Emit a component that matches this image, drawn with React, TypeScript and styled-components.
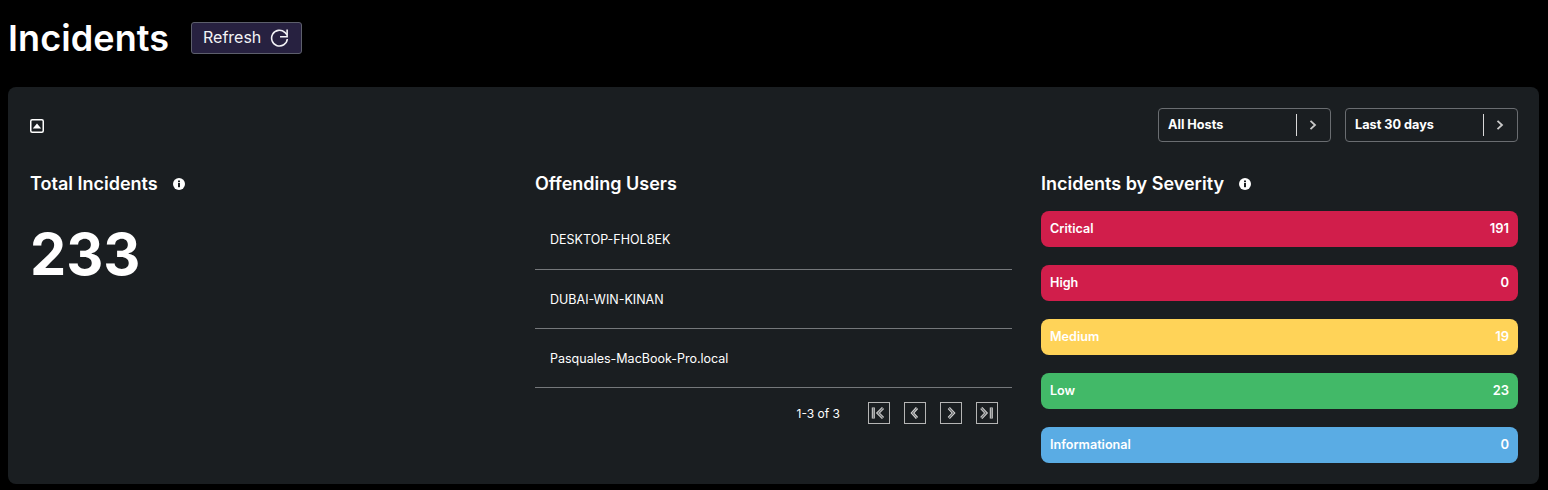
import React, {FC} from 'react'
import styled, {createGlobalStyle} from 'styled-components'

const GlobalStyle = createGlobalStyle`
  html, body {
    margin: 0;
    padding: 0;
    background: #000;
    color: #fff;
    font-family: Inter, "Liberation Sans", sans-serif;
  }
  * { box-sizing: border-box; }
`

const Root = styled.div`
  width: 1548px;
  height: 490px;
  padding: 0 9px 6px 8px;
  display: flex;
  flex-direction: column;
  overflow: hidden;
`

const Header = styled.header`
  display: flex;
  align-items: center;
  gap: 22px;
  height: 87px;
  padding-bottom: 11px;
`

const Title = styled.h1`
  margin: 0;
  width: 161px;
  font-size: 36px;
  line-height: 44px;
  font-weight: 600;
  letter-spacing: 0.1px;
`

const RefreshButton = styled.button`
  display: flex;
  align-items: center;
  gap: 9px;
  width: 111px;
  height: 32px;
  padding: 0 11px 2px;
  background: #272140;
  border: 1px solid #5d5f6c;
  border-radius: 3px;
  color: #f3f3f6;
  font: 400 16px Inter, "Liberation Sans", sans-serif;
`

const RefreshGlyph = styled.svg`
  margin-top: 2px;
`

const Panel = styled.section`
  flex: 1;
  background: #1a1e21;
  border-radius: 8px;
  padding: 21px 21px 21px 22px;
  display: flex;
  flex-direction: column;
`

const TopBar = styled.div`
  display: flex;
  align-items: center;
  justify-content: space-between;
  height: 34px;
`

const CollapseWrap = styled.span`
  display: flex;
  padding-top: 2px;
`

const Filters = styled.div`
  display: flex;
  gap: 14px;
`

const Filter = styled.div`
  display: flex;
  align-items: center;
  width: 173px;
  height: 34px;
  padding: 0 13px 0 9px;
  border: 1px solid #6a6d71;
  border-radius: 4px;
  font-size: 12.7px;
  font-weight: 700;
`

const FilterLabel = styled.span`
  flex: 1;
  padding-bottom: 2px;
`

const FilterDivider = styled.span`
  width: 1px;
  height: 22px;
  background: #d8d8d8;
  margin-right: 12px;
`

const Columns = styled.div`
  display: grid;
  grid-template-columns: 477px 478px 477px;
  column-gap: 28px;
  margin-top: 30px;
`

const Column = styled.div`
  display: flex;
  flex-direction: column;
`

const ColumnHeading = styled.div`
  display: flex;
  align-items: center;
  gap: 15px;
  height: 24px;
  padding-bottom: 2px;
  font-size: 18px;
  font-weight: 600;
`

const InfoGlyph = styled.svg`
  margin-top: 2px;
`

const BigNumber = styled.div`
  margin-top: 23px;
  font-size: 57.5px;
  line-height: 70px;
  font-weight: 700;
`

const UserList = styled.ul`
  list-style: none;
  margin: 15px 1px 0 0;
  padding: 0;
`

const UserRow = styled.li`
  height: 59px;
  padding: 0 15px;
  display: flex;
  align-items: center;
  border-bottom: 1px solid #75787b;
  font-size: 12.5px;
  font-weight: 400;
  &:first-child { padding-bottom: 1px; }
`

const Pager = styled.div`
  display: flex;
  align-items: center;
  justify-content: flex-end;
  margin-top: 14px;
  padding-right: 15px;
  height: 22px;
`

const PagerText = styled.span`
  font-size: 12px;
  margin-right: 28px;
`

const PagerButtons = styled.div`
  display: flex;
  gap: 14px;
`

const PagerButton = styled.button`
  width: 22px;
  height: 22px;
  padding: 0;
  display: flex;
  align-items: center;
  justify-content: center;
  background: none;
  border: 1px solid #b5b5b5;
`

const Bars = styled.div`
  display: flex;
  flex-direction: column;
  gap: 18px;
  margin-top: 15px;
`

const Bar = styled.div<{$color: string}>`
  height: 36px;
  padding: 0 9px 2px;
  display: flex;
  align-items: center;
  justify-content: space-between;
  border-radius: 8px;
  background: ${({$color}) => $color};
  font-size: 12.6px;
  font-weight: 600;
`

const BarCount = styled.span`
  font-size: 13px;
`

const InfoIcon: FC = () => (
    <InfoGlyph width="12" height="12" viewBox="0 0 12 12">
        <circle cx="6" cy="6" r="6" fill="#fff"/>
        <rect x="5" y="5" width="2" height="4.2" fill="#1a1e21"/>
        <rect x="5" y="2.5" width="2" height="1.7" fill="#1a1e21"/>
    </InfoGlyph>
)

const CollapseIcon: FC = () => (
    <svg width="14" height="14" viewBox="0 0 14 14">
        <rect x="0.75" y="0.75" width="12.5" height="12.5" rx="1.5" fill="none" stroke="#fff" strokeWidth="1.5"/>
        <path d="M2.8 9.5 L7 4.5 L11.2 9.5 Z" fill="#fff"/>
    </svg>
)

const RefreshIcon: FC = () => (
    <RefreshGlyph width="20" height="20" viewBox="0 0 20 20" fill="none" stroke="#f3f3f6" strokeWidth="1.6">
        <path d="M17.6 11 A8 8 0 1 1 15 4.2 L17.2 6.6"/>
        <path d="M17.4 1.3 V8.7 H10.2"/>
    </RefreshGlyph>
)

const Chevron: FC = () => (
    <svg width="8" height="12" viewBox="0 0 8 12" fill="none" stroke="#c9c9c9" strokeWidth="1.8">
        <path d="M1.5 1.8 L6 6 L1.5 10.2"/>
    </svg>
)

// outlined look of the pager glyphs: a light thick stroke with a grey core
const PagerIcon: FC<{d: string}> = ({d}) => (
    <svg width="18" height="16" viewBox="0 0 18 16" fill="none">
        <path d={d} stroke="#d6d6d6" strokeWidth="3"/>
        <path d={d} stroke="#6e7072" strokeWidth="1.1"/>
    </svg>
)

const users = ['DESKTOP-FHOL8EK', 'DUBAI-WIN-KINAN', 'Pasquales-MacBook-Pro.local']

const severities = [
    {label: 'Critical', count: 191, color: '#d11e4b'},
    {label: 'High', count: 0, color: '#d11e4b'},
    {label: 'Medium', count: 19, color: '#ffd358'},
    {label: 'Low', count: 23, color: '#42b968'},
    {label: 'Informational', count: 0, color: '#5aace4'},
]

const pagerPaths = [
    'M3.3 2.5 V13.5 M13 3 L8 8 L13 13',
    'M11 3 L6.5 8 L11 13',
    'M6.8 3 L11.5 8 L6.8 13',
    'M3.3 3 L8 8 L3.3 13 M13.3 2.5 V13.5',
]

const App: FC = () => {
    return (
        <Root>
            <GlobalStyle/>
            <Header>
                <Title>Incidents</Title>
                <RefreshButton>Refresh <RefreshIcon/></RefreshButton>
            </Header>
            <Panel>
                <TopBar>
                    <CollapseWrap><CollapseIcon/></CollapseWrap>
                    <Filters>
                        <Filter>
                            <FilterLabel>All Hosts</FilterLabel>
                            <FilterDivider/>
                            <Chevron/>
                        </Filter>
                        <Filter>
                            <FilterLabel>Last 30 days</FilterLabel>
                            <FilterDivider/>
                            <Chevron/>
                        </Filter>
                    </Filters>
                </TopBar>
                <Columns>
                    <Column>
                        <ColumnHeading>Total Incidents <InfoIcon/></ColumnHeading>
                        <BigNumber>233</BigNumber>
                    </Column>
                    <Column>
                        <ColumnHeading>Offending Users</ColumnHeading>
                        <UserList>
                            {users.map((user: string) => (
                                <UserRow key={user}>{user}</UserRow>
                            ))}
                        </UserList>
                        <Pager>
                            <PagerText>1-3 of 3</PagerText>
                            <PagerButtons>
                                {pagerPaths.map((d: string) => (
                                    <PagerButton key={d}><PagerIcon d={d}/></PagerButton>
                                ))}
                            </PagerButtons>
                        </Pager>
                    </Column>
                    <Column>
                        <ColumnHeading>Incidents by Severity <InfoIcon/></ColumnHeading>
                        <Bars>
                            {severities.map(item => (
                                <Bar key={item.label} $color={item.color}>
                                    <span>{item.label}</span>
                                    <BarCount>{item.count}</BarCount>
                                </Bar>
                            ))}
                        </Bars>
                    </Column>
                </Columns>
            </Panel>
        </Root>
    )
}

export default App
